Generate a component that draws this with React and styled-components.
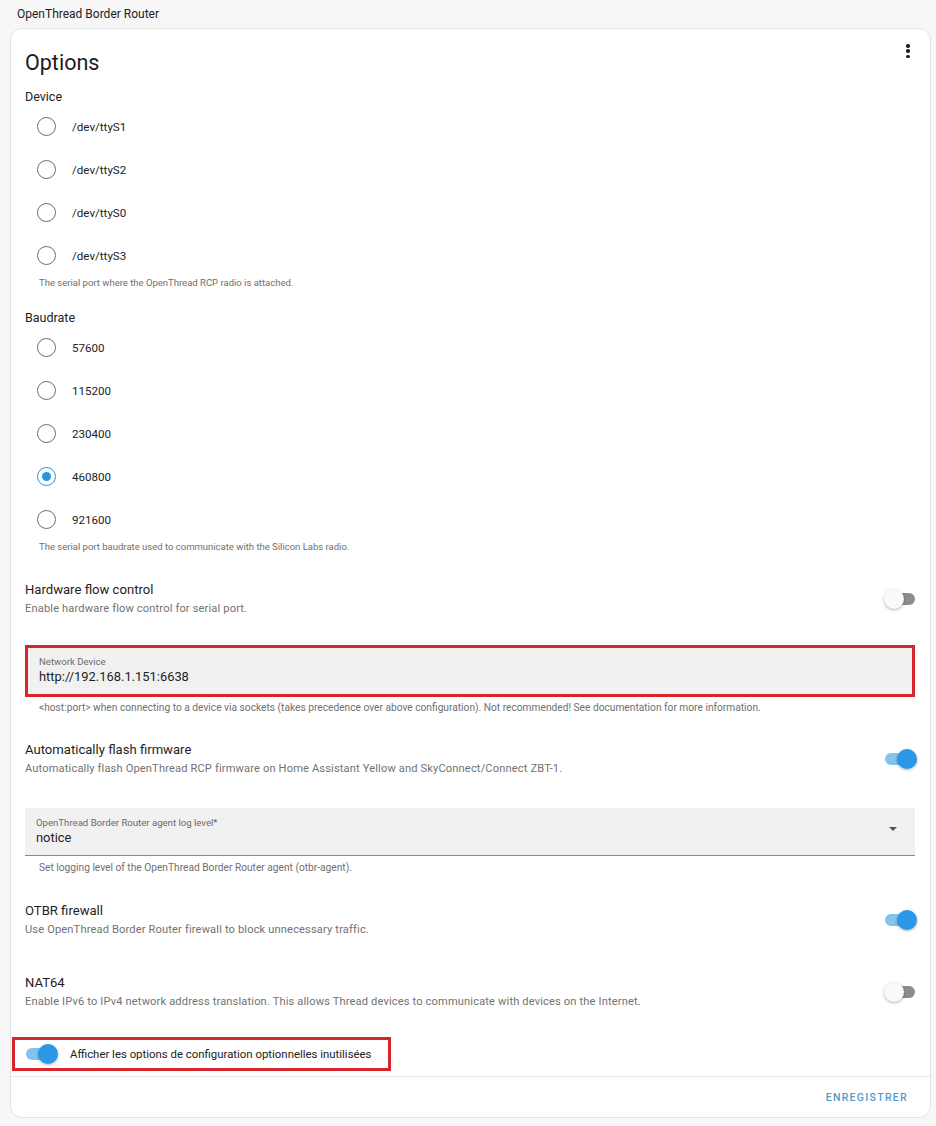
import React from 'react'
import styled, { createGlobalStyle } from 'styled-components'

const GlobalStyle = createGlobalStyle`
    html, body {
        margin: 0;
        padding: 0;
        background: #f7f7f7;
        font-family: Roboto, "Noto Sans", "Liberation Sans", sans-serif;
        color: #212121;
    }
`

const Page = styled.div`
    width: 936px;
    min-height: 1126px;
    background: #f7f7f7;
`
const TopBar = styled.div`
    height: 28px;
    display: flex;
    align-items: center;
    padding-left: 17px;
    font-size: 12px;
    color: #222;
`
const Card = styled.div`
    margin: 0 5px 0 10px;
    background: #fff;
    border: 1px solid #e3e3e3;
    border-radius: 12px;
    display: flex;
    flex-direction: column;
`
const Content = styled.div`
    position: relative;
    padding: 18px 15px 5px 14px;
    display: flex;
    flex-direction: column;
`
const Heading = styled.h1`
    margin: 0;
    font-size: 21.5px;
    font-weight: 400;
    line-height: 32px;
    color: #1c1c1c;
`
const MenuButton = styled.div`
    position: absolute;
    top: 15px;
    right: 18px;
    width: 8px;
    height: 14px;
    display: flex;
    flex-direction: column;
    justify-content: space-between;
    align-items: center;
`
const Dot = styled.span`
    width: 3.5px;
    height: 3.5px;
    border-radius: 50%;
    background: #1e1e1e;
`
const GroupLabel = styled.div`
    font-size: 12.5px;
    line-height: 16px;
    margin-top: ${p => p.$top}px;
    color: #222;
`
const RadioList = styled.div`
    display: flex;
    flex-direction: column;
`
const RadioRow = styled.div`
    height: 43px;
    display: flex;
    align-items: center;
    padding-left: 12px;
    gap: 16px;
    font-size: 11.6px;
    color: #222;
`
const RadioCircle = styled.span`
    width: 19px;
    height: 19px;
    box-sizing: border-box;
    border-radius: 50%;
    border: 1.5px solid ${p => (p.$checked ? '#2b95df' : '#6e6e6e')};
    display: flex;
    align-items: center;
    justify-content: center;
    &::after {
        content: '';
        width: 9px;
        height: 9px;
        border-radius: 50%;
        background: ${p => (p.$checked ? '#2b95df' : 'transparent')};
    }
`
const Helper = styled.div`
    font-size: ${p => (p.$field ? 10.2 : 9.5)}px;
    line-height: ${p => (p.$field ? 13 : 12)}px;
    color: #6f6f6f;
    padding-left: 14px;
    margin-top: ${p => p.$top || 0}px;
`
const SettingRow = styled.div`
    display: flex;
    align-items: center;
    justify-content: space-between;
    margin-top: ${p => p.$top}px;
`
const SettingText = styled.div`
    display: flex;
    flex-direction: column;
`
const SettingTitle = styled.div`
    font-size: 13.1px;
    line-height: 19px;
    color: #1e1e1e;
`
const SettingDesc = styled.div`
    font-size: 11.1px;
    line-height: 19px;
    color: #727272;
    letter-spacing: 0.15px;
`
const Track = styled.span`
    position: relative;
    display: inline-block;
    width: 30px;
    height: 12px;
    border-radius: 6px;
    margin-right: ${p => p.$mr || 0}px;
    flex-shrink: 0;
    background: ${p => (p.$on ? '#84c3ef' : '#8c8c8c')};
`
const Thumb = styled.span`
    position: absolute;
    top: -4px;
    left: ${p => (p.$on ? '12px' : '-1px')};
    width: 20px;
    height: 20px;
    border-radius: 50%;
    background: ${p => (p.$on ? '#2a98e6' : '#fafafa')};
    box-shadow: 0 1px 3px rgba(0, 0, 0, 0.3);
`
const Highlight = styled.div`
    border: 3px solid #d7262b;
    margin-top: ${p => p.$top}px;
    margin-left: ${p => p.$left || 0}px;
    align-self: ${p => (p.$fit ? 'flex-start' : 'stretch')};
`
const FilledField = styled.div`
    background: #f1f1f1;
    padding: ${p => p.$pad};
    display: flex;
    align-items: center;
    justify-content: space-between;
    border-bottom: ${p => (p.$underline ? '1px solid #8a8a8a' : 'none')};
    margin-top: ${p => p.$top || 0}px;
`
const FieldText = styled.div`
    display: flex;
    flex-direction: column;
`
const FieldLabel = styled.div`
    font-size: 9.6px;
    line-height: 12px;
    color: #6a6a6a;
`
const FieldValue = styled.div`
    font-size: 12.9px;
    line-height: 18px;
    color: #1e1e1e;
`
const Caret = styled.span`
    width: 0;
    height: 0;
    margin-right: 18px;
    margin-top: -6px;
    border-left: 4px solid transparent;
    border-right: 4px solid transparent;
    border-top: 4px solid #555;
`
const ToggleLine = styled.div`
    display: flex;
    align-items: center;
    height: 28px;
    padding: 0 17px 0 11px;
    font-size: 11.4px;
    color: #222;
`
const Footer = styled.div`
    border-top: 1px solid #e6e6e6;
    height: 40px;
    display: flex;
    align-items: center;
    justify-content: flex-end;
    padding-right: 22px;
`
const SaveButton = styled.span`
    font-size: 10.5px;
    font-weight: 500;
    letter-spacing: 1.3px;
    color: #4f9ccb;
`

const Toggle = ({ on, mr }) => (
    <Track $on={on} $mr={mr}>
        <Thumb $on={on} />
    </Track>
)

const RadioGroup = ({ options, selected }) => (
    <RadioList>
        {options.map(o => (
            <RadioRow key={o}>
                <RadioCircle $checked={o === selected} />
                <span>{o}</span>
            </RadioRow>
        ))}
    </RadioList>
)

const Setting = ({ top, title, desc, on }) => (
    <SettingRow $top={top}>
        <SettingText>
            <SettingTitle>{title}</SettingTitle>
            <SettingDesc>{desc}</SettingDesc>
        </SettingText>
        <Toggle on={on} />
    </SettingRow>
)

const App = () => {
    return (
        <Page>
            <GlobalStyle />
            <TopBar>OpenThread Border Router</TopBar>
            <Card>
                <Content>
                    <Heading>Options</Heading>
                    <MenuButton>
                        <Dot />
                        <Dot />
                        <Dot />
                    </MenuButton>

                    <GroupLabel $top={10}>Device</GroupLabel>
                    <RadioGroup options={['/dev/ttyS1', '/dev/ttyS2', '/dev/ttyS0', '/dev/ttyS3']} />
                    <Helper>The serial port where the OpenThread RCP radio is attached.</Helper>

                    <GroupLabel $top={21}>Baudrate</GroupLabel>
                    <RadioGroup options={['57600', '115200', '230400', '460800', '921600']} selected="460800" />
                    <Helper>The serial port baudrate used to communicate with the Silicon Labs radio.</Helper>

                    <Setting
                        top={27}
                        title="Hardware flow control"
                        desc="Enable hardware flow control for serial port."
                        on={false}
                    />

                    <Highlight $top={27}>
                        <FilledField $pad="8px 12px 8px 11px">
                            <FieldText>
                                <FieldLabel>Network Device</FieldLabel>
                                <FieldValue>http://192.168.1.151:6638</FieldValue>
                            </FieldText>
                        </FilledField>
                    </Highlight>
                    <Helper $field $top={4}>
                        &lt;host:port&gt; when connecting to a device via sockets (takes precedence over above configuration). Not recommended! See documentation for more information.
                    </Helper>

                    <Setting
                        top={26}
                        title="Automatically flash firmware"
                        desc="Automatically flash OpenThread RCP firmware on Home Assistant Yellow and SkyConnect/Connect ZBT-1."
                        on
                    />

                    <FilledField $pad="9px 0 8px 11px" $underline $top={30}>
                        <FieldText>
                            <FieldLabel>OpenThread Border Router agent log level*</FieldLabel>
                            <FieldValue>notice</FieldValue>
                        </FieldText>
                        <Caret />
                    </FilledField>
                    <Helper $field $top={5}>Set logging level of the OpenThread Border Router agent (otbr-agent).</Helper>

                    <Setting
                        top={27}
                        title="OTBR firewall"
                        desc="Use OpenThread Border Router firewall to block unnecessary traffic."
                        on
                    />

                    <Setting
                        top={34}
                        title="NAT64"
                        desc="Enable IPv6 to IPv4 network address translation. This allows Thread devices to communicate with devices on the Internet."
                        on={false}
                    />

                    <Highlight $top={26} $left={-13} $fit>
                        <ToggleLine>
                            <Toggle on mr={14} />
                            Afficher les options de configuration optionnelles inutilisées
                        </ToggleLine>
                    </Highlight>
                </Content>
                <Footer>
                    <SaveButton>ENREGISTRER</SaveButton>
                </Footer>
            </Card>
        </Page>
    )
}

export default App
